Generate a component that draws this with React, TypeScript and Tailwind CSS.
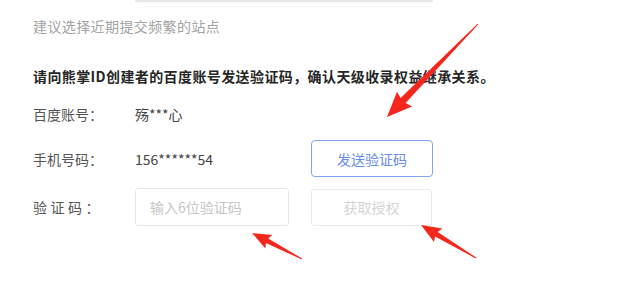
import React from "react";

type Pt = [number, number];

function arrowPoints(tail: Pt, tip: Pt, headLen: number, headW: number, shaftW: number, tailW: number): string {
  const dx = tip[0] - tail[0];
  const dy = tip[1] - tail[1];
  const len = Math.hypot(dx, dy);
  const ux = dx / len;
  const uy = dy / len;
  const nx = -uy;
  const ny = ux;
  const bx = tip[0] - ux * headLen;
  const by = tip[1] - uy * headLen;
  const pts: Pt[] = [
    [tail[0] + nx * tailW / 2, tail[1] + ny * tailW / 2],
    [bx + nx * shaftW / 2, by + ny * shaftW / 2],
    [bx + nx * headW / 2 - ux * 2, by + ny * headW / 2 - uy * 2],
    [tip[0], tip[1]],
    [bx - nx * headW / 2 - ux * 2, by - ny * headW / 2 - uy * 2],
    [bx - nx * shaftW / 2, by - ny * shaftW / 2],
    [tail[0] - nx * tailW / 2, tail[1] - ny * tailW / 2],
  ];
  return pts.map((p) => `${p[0].toFixed(1)},${p[1].toFixed(1)}`).join(" ");
}

export default function App() {
  return (
    <div
      className="relative w-[627px] h-[282px] overflow-hidden bg-white"
      style={{ fontFamily: '"Noto Sans CJK SC", "Noto Sans", sans-serif' }}
    >
      <div className="ml-[135px] w-[298px] h-[2px] bg-[#e8e8e8] shadow-[0_1px_2px_rgba(0,0,0,0.04)]" />
      <div className="ml-[143px] mt-[4px] w-[289px] h-px bg-[#f5f5f5]" />
      <p className="ml-[33px] mt-[9px] text-[14px] leading-[20px] tracking-[0.4px] text-[#a3a3a3]">建议选择近期提交频繁的站点</p>
      <p className="ml-[33px] mt-[30px] text-[14px] leading-[20px] tracking-[0.4px] font-semibold text-[#262626]">
        请向熊掌ID创建者的百度账号发送验证码，确认天级收录权益继承关系。
      </p>
      <div className="ml-[33px] mt-[18px] flex items-center h-[20px] text-[14px] leading-[20px]">
        <span className="w-[102px] text-[#555]">百度账号：</span>
        <span className="text-[#444]">殇***心</span>
      </div>
      <div className="ml-[33px] mt-[16px] flex items-center h-[37px] text-[14px] leading-[20px]">
        <span className="w-[102px] text-[#555]">手机号码：</span>
        <span className="w-[176px] text-[#444]">156******54</span>
        <button className="w-[122px] h-[37px] rounded-[4px] border border-[#86a5f2] text-[#6a8de6] text-[14px] bg-white">
          发送验证码
        </button>
      </div>
      <div className="ml-[33px] mt-[11px] flex items-center h-[38px] text-[14px] leading-[20px]">
        <span className="w-[102px] text-[#555] tracking-[3.5px]">验证码：</span>
        <input
          className="w-[154px] h-[38px] rounded-[3px] border border-[#e6e6e6] pl-[14px] text-[14px] placeholder:text-[#c6c6c6] outline-none"
          placeholder="输入6位验证码"
        />
        <button className="ml-[22px] w-[121px] h-[37px] rounded-[3px] border border-[#ebebeb] text-[#d4d4d4] text-[14px] bg-white">
          获取授权
        </button>
      </div>

      <svg className="absolute left-0 top-0 pointer-events-none" width="627" height="282" viewBox="0 0 627 282">
        <polygon points={arrowPoints([478, 24], [387, 117], 23, 21, 7, 1)} fill="#f5261c" />
        <polygon points={arrowPoints([302, 259], [252, 233], 17, 15, 5, 1)} fill="#f5261c" />
        <polygon points={arrowPoints([476, 258], [421, 225], 18, 16, 5, 1)} fill="#f5261c" />
      </svg>
    </div>
  );
}
